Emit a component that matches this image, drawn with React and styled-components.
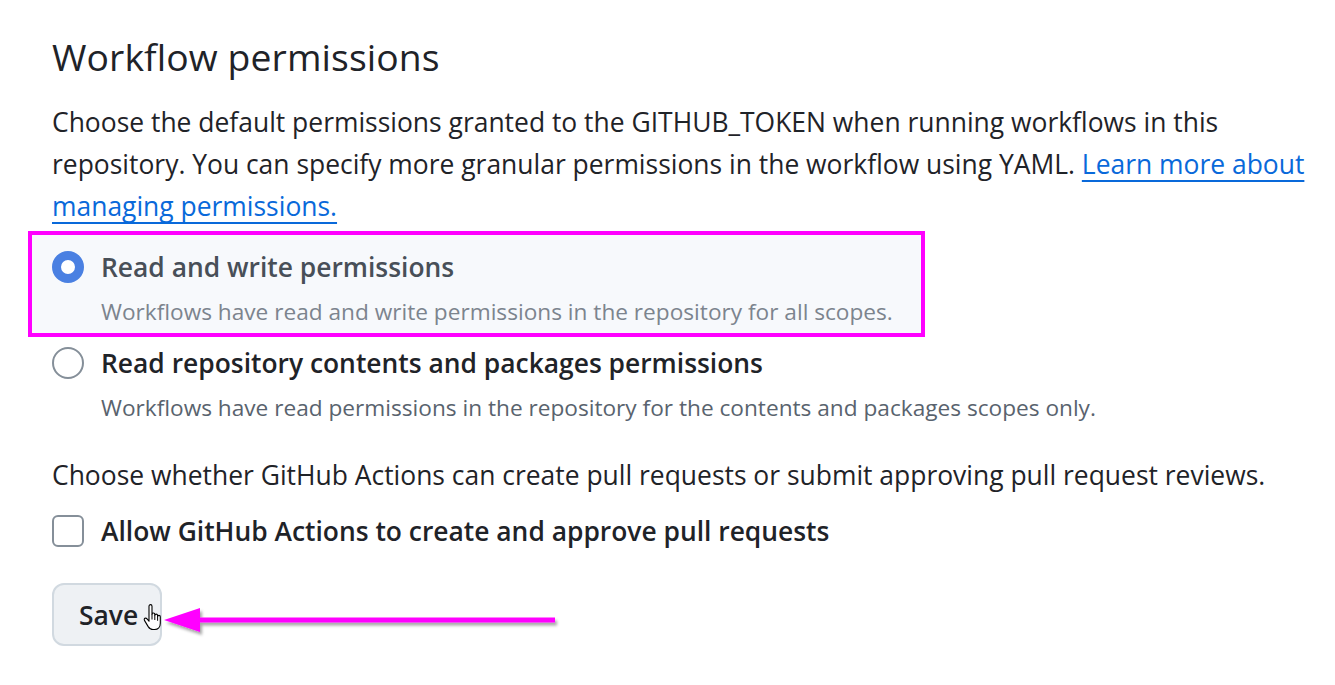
import React from "react";
import styled, { createGlobalStyle } from "styled-components";

const Global = createGlobalStyle`
  html, body { margin: 0; padding: 0; background: #ffffff; }
  body { font-family: "Open Sans", "Noto Sans", sans-serif; color: #1f2328; }
`;

const Page = styled.div`
  position: relative;
  width: 1335px;
  height: 685px;
  overflow: hidden;
  box-sizing: border-box;
  padding: 30px 0 0 52px;
`;

const Content = styled.div`
  width: 1262px;
  display: flex;
  flex-direction: column;
`;

const Title = styled.h2`
  margin: 0;
  font-size: 37.3px;
  font-weight: 400;
  line-height: 54px;
  color: #1f2328;
  letter-spacing: 0.1px;
`;

const Paragraph = styled.p`
  margin: ${(p) => p.$mt || 0}px 0 0 0;
  font-size: 26.45px;
  line-height: 42px;
  color: #1f2328;
`;

const Link = styled.a`
  color: #0969da;
  text-decoration: underline;
  text-decoration-thickness: 2px;
  text-underline-offset: 6px;
`;

const OptionList = styled.div`
  display: flex;
  flex-direction: column;
  margin-top: 4px;
  gap: 5px;
`;

const Highlight = styled.div`
  align-self: flex-start;
  margin-left: -24px;
  padding: 11px 28px 3px 20px;
  border: 4px solid #ff00ff;
  background: #f7f9fc;
`;

const Option = styled.label`
  display: grid;
  grid-template-columns: 32px 1fr;
  column-gap: 17px;
  align-items: center;
`;

const Radio = styled.span`
  width: 32px;
  height: 32px;
  box-sizing: border-box;
  border-radius: 50%;
  border: ${(p) => (p.$checked ? "9px solid #4a80e2" : "2px solid #858f99")};
  background: #ffffff;
`;

const Box = styled.span`
  width: 32px;
  height: 32px;
  box-sizing: border-box;
  border-radius: 6px;
  border: 2px solid #858f99;
  background: #ffffff;
`;

const OptionLabel = styled.span`
  font-size: 26.4px;
  font-weight: 600;
  line-height: 42px;
  color: ${(p) => (p.$muted ? "#484f58" : "#1f2328")};
`;

const OptionDesc = styled.span`
  grid-column: 2;
  margin-top: 6px;
  font-size: 22.65px;
  line-height: 36px;
  color: ${(p) => (p.$muted ? "#7c848e" : "#59636e")};
`;

const CheckRow = styled(Option)`
  margin-top: 14px;
`;

const ButtonWrap = styled.div`
  position: relative;
  align-self: flex-start;
  margin-top: 31px;
`;

const Button = styled.button`
  display: block;
  width: 110px;
  height: 63px;
  box-sizing: border-box;
  text-align: left;
  padding: 0 0 0 25px;
  border: 2px solid #d1d9e0;
  border-radius: 12px;
  background: #eef1f4;
  font-family: "Open Sans", "Noto Sans", sans-serif;
  font-size: 26.4px;
  font-weight: 600;
  color: #1f2328;
`;

const Cursor = styled.svg`
  position: absolute;
  left: 91px;
  top: 21px;
  width: 20px;
  height: 27px;
`;

const Arrow = styled.svg`
  position: absolute;
  left: 150px;
  top: 595px;
  width: 420px;
  height: 50px;
  overflow: visible;
`;

export default function App() {
  return (
    <Page>
      <Global />
      <Content>
        <Title>Workflow permissions</Title>
        <Paragraph $mt={17}>
          Choose the default permissions granted to the GITHUB_TOKEN when running workflows in this
          repository. You can specify more granular permissions in the workflow using YAML.{" "}
          <Link href="#">Learn more about managing permissions.</Link>
        </Paragraph>
        <OptionList>
          <Highlight>
            <Option>
              <Radio $checked />
              <OptionLabel $muted>Read and write permissions</OptionLabel>
              <OptionDesc $muted>
                Workflows have read and write permissions in the repository for all scopes.
              </OptionDesc>
            </Option>
          </Highlight>
          <Option>
            <Radio />
            <OptionLabel>Read repository contents and packages permissions</OptionLabel>
            <OptionDesc>
              Workflows have read permissions in the repository for the contents and packages scopes only.
            </OptionDesc>
          </Option>
        </OptionList>
        <Paragraph $mt={28}>
          Choose whether GitHub Actions can create pull requests or submit approving pull request reviews.
        </Paragraph>
        <CheckRow>
          <Box />
          <OptionLabel>Allow GitHub Actions to create and approve pull requests</OptionLabel>
        </CheckRow>
        <ButtonWrap>
          <Button>Save</Button>
          <Cursor viewBox="0 0 20 26" preserveAspectRatio="none">
            <path
              d="M6 2.2c0-1 .7-1.6 1.5-1.6S9 1.2 9 2.2V10c0-.8.6-1.3 1.4-1.3s1.4.5 1.4 1.3v1c0-.8.6-1.3 1.4-1.3s1.4.5 1.4 1.3v1.2c0-.8.6-1.3 1.3-1.3s1.4.5 1.4 1.3v6.4c0 3.6-2.3 6-5.6 6H10c-2.3 0-3.6-1-4.8-2.8L1.6 16c-.6-.9-.4-1.8.3-2.2.7-.4 1.5-.2 2.1.5L6 16.6V2.2z"
              fill="#ffffff"
              stroke="#000000"
              strokeWidth="1.1"
              strokeLinejoin="round"
            />
            <path d="M9 10v5M11.8 11v4.5M14.6 12.2v4" stroke="#000" strokeWidth="1" />
          </Cursor>
        </ButtonWrap>
      </Content>
      <Arrow viewBox="0 0 420 50">
        <defs>
          <filter id="sh" x="-10%" y="-50%" width="120%" height="200%">
            <feDropShadow dx="2" dy="3" stdDeviation="1.5" floodColor="#000" floodOpacity="0.35" />
          </filter>
        </defs>
        <g filter="url(#sh)">
          <rect x="46" y="22.5" width="359" height="5" fill="#ff00ff" />
          <polygon points="14,25 50,13 50,37" fill="#ff00ff" />
        </g>
      </Arrow>
    </Page>
  );
}
